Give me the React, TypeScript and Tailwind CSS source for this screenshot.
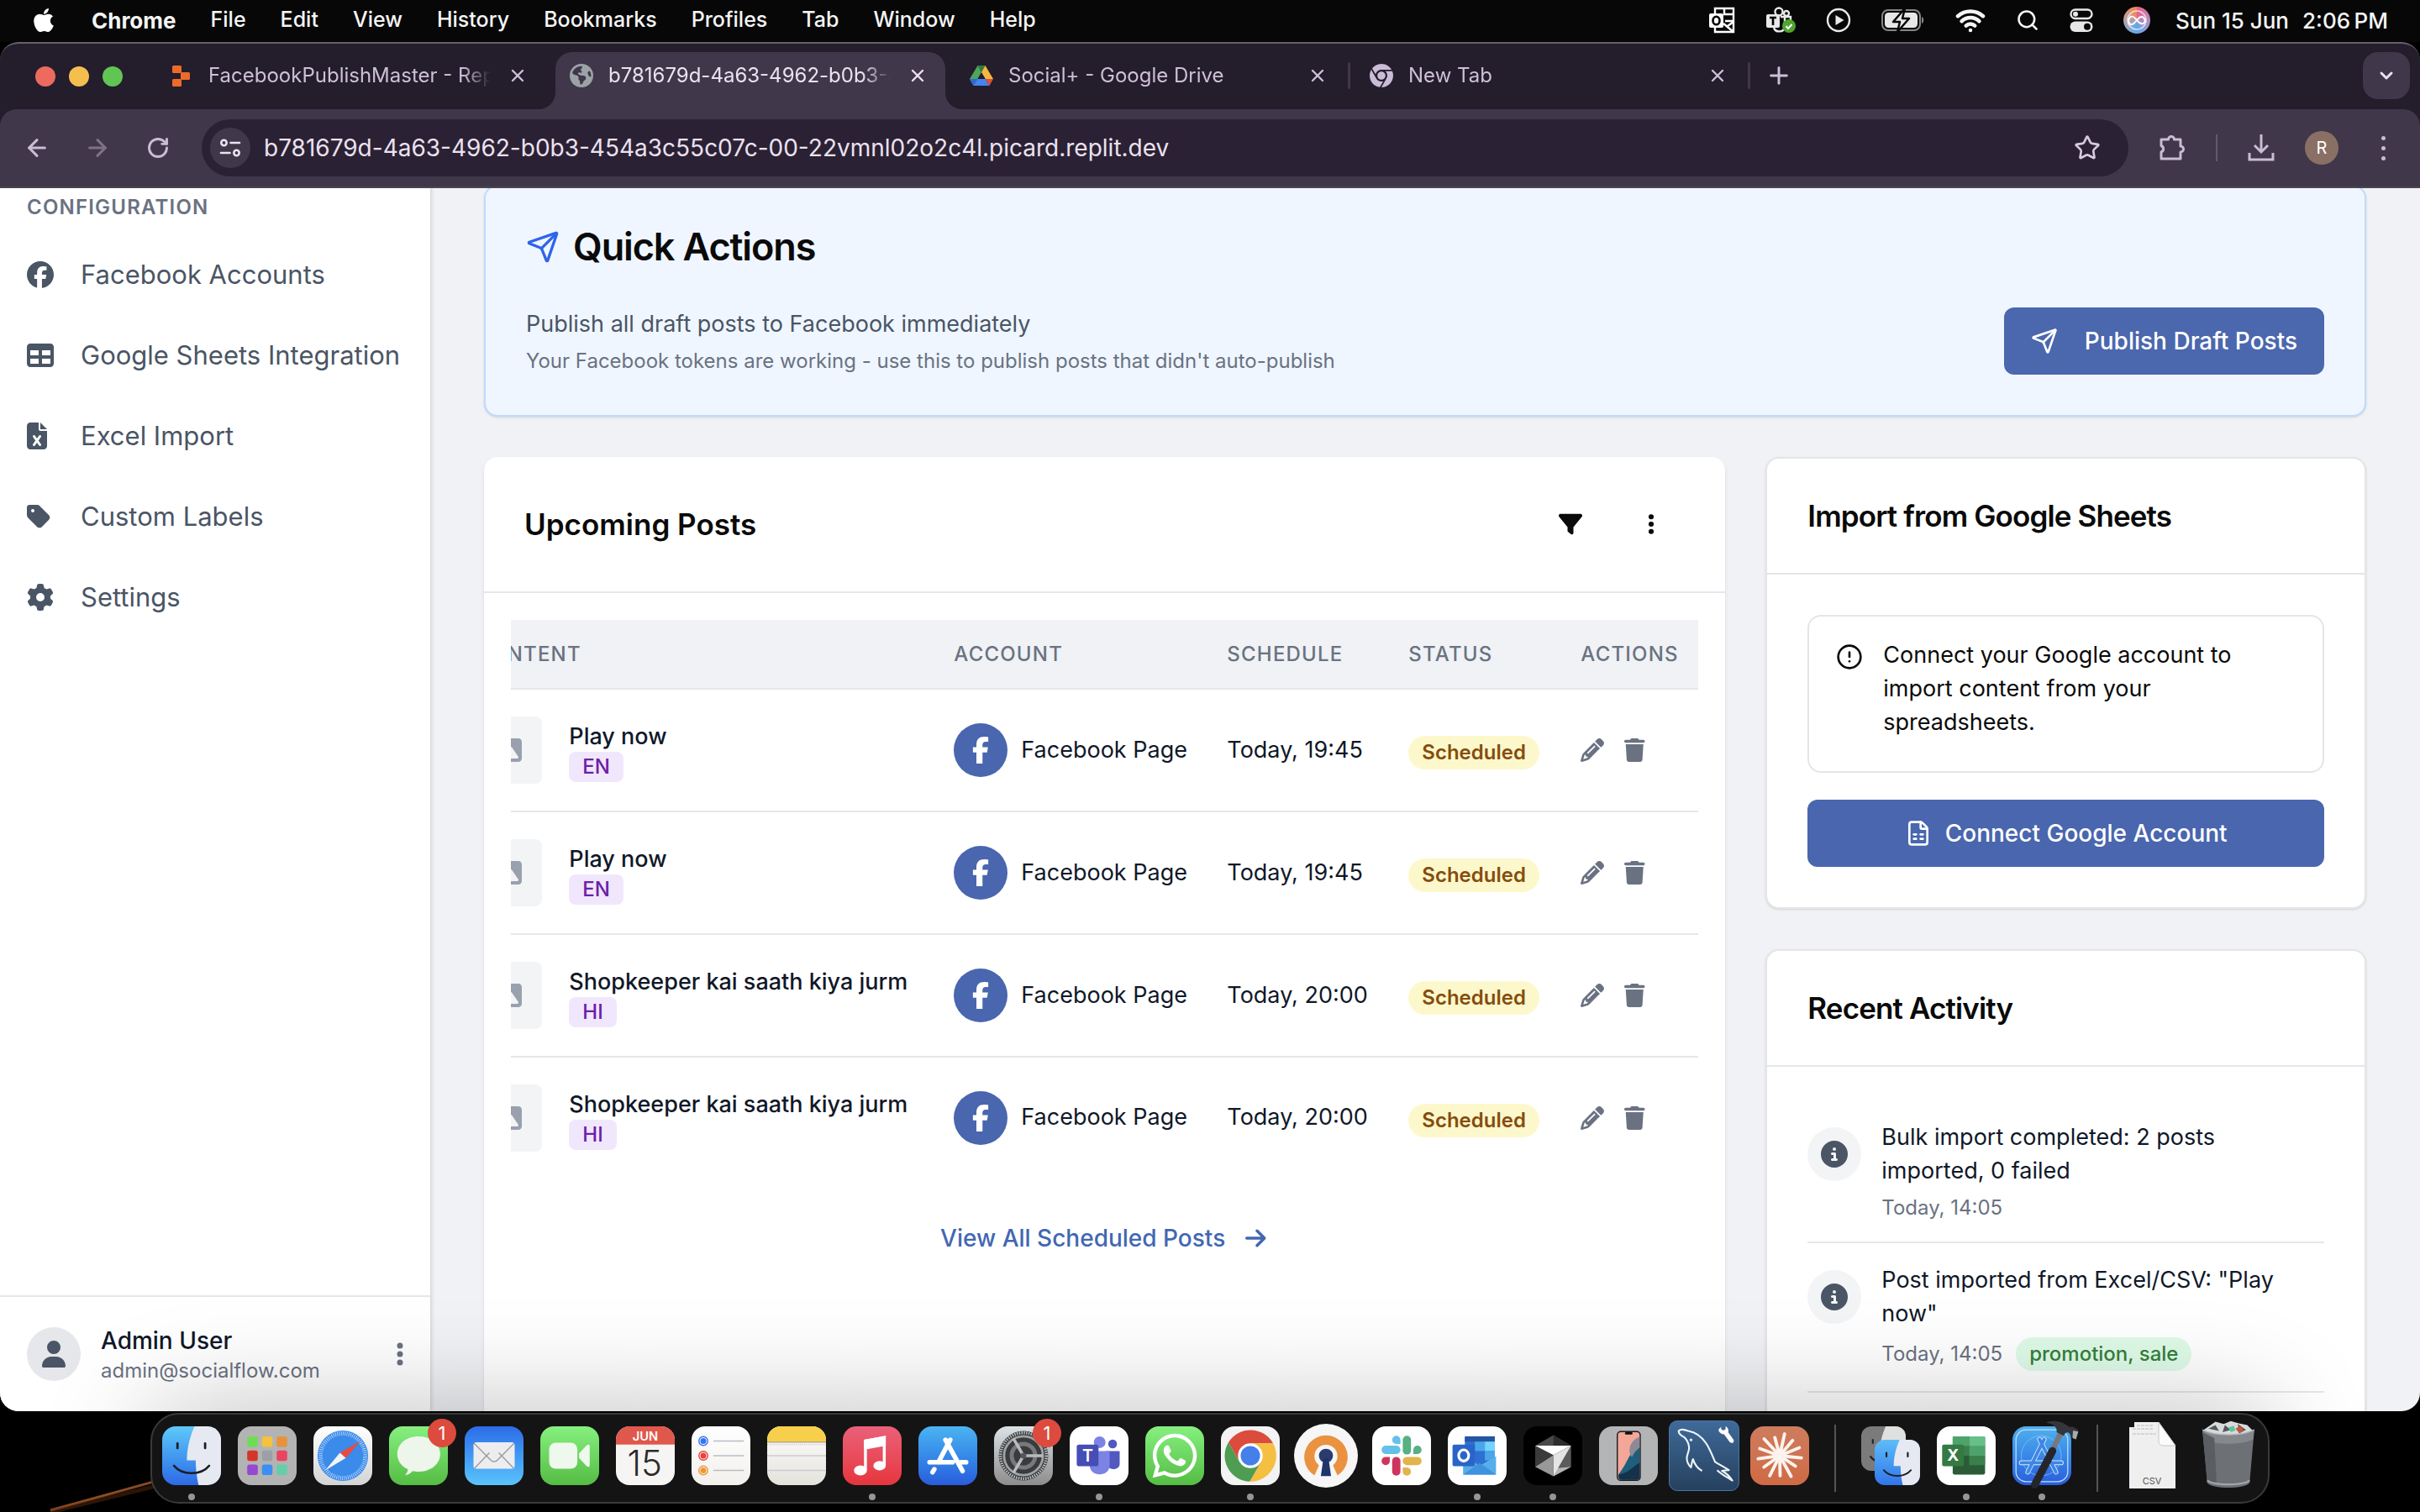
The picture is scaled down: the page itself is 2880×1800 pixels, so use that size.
import React from 'react';
import { ArrowLeft, ArrowRight, ChevronDown, CircleAlert, FileSpreadsheet, Plus, RotateCw, Search, Send, Star, Wifi, X } from 'lucide-react';
import {
  FaApple,
  FaArrowRight,
  FaChrome,
  FaCircleInfo,
  FaEarthAmericas,
  FaEllipsisVertical,
  FaFacebook,
  FaFacebookF,
  FaFileExcel,
  FaFilter,
  FaGear,
  FaImage,
  FaPencil,
  FaTable,
  FaTag,
  FaTrash,
  FaUser,
  FaWhatsapp,
} from 'react-icons/fa6';

/* ---------- macOS menu bar ---------- */

const menus = ['File', 'Edit', 'View', 'History', 'Bookmarks', 'Profiles', 'Tab', 'Window', 'Help'];

function OutlookStatusIcon() {
  return (
    <svg viewBox="0 0 32 32" className="size-8" fill="none" stroke="#fff" strokeWidth="2.4">
      <path d="M8 9V2h22v28H8v-6" />
      <path d="M18 9h12M20 17h10M19 2v7M18 20l12 10M30 18l-7 5" />
      <rect x="1" y="8" width="17" height="17" rx="2" fill="#fff" stroke="none" />
      <ellipse cx="9.500" cy="16.500" rx="4" ry="4.800" stroke="#000" strokeWidth="2.600" />
    </svg>
  );
}

function TeamsStatusIcon() {
  return (
    <svg viewBox="0 0 36 32" className="h-8 w-9" fill="none" stroke="#e8e8e8" strokeWidth="2.4">
      <circle cx="16" cy="6" r="4.500" />
      <circle cx="25" cy="8" r="3" />
      <path d="M20 12h10v6M10 25c2 6 12 6 13-1V12h-5" />
      <rect x="1" y="9" width="16" height="16" rx="2" fill="#e8e8e8" stroke="none" />
      <path d="M5 13h8M9 13v9" stroke="#000" strokeWidth="2.600" />
      <circle cx="28" cy="23" r="8" fill="#4ea52f" stroke="none" />
      <path d="m24.500 23 2.500 3 4.500-5" stroke="#fff" strokeWidth="2" />
    </svg>
  );
}

function BatteryIcon() {
  return (
    <svg viewBox="0 0 52 28" className="h-7 w-[52px]">
      <rect x="1" y="2" width="45" height="24" rx="7" fill="none" stroke="#858585" strokeWidth="2" />
      <path d="M48 10c3 1 3 7 0 8z" fill="#858585" />
      <rect x="4" y="5" width="39" height="18" rx="4.500" fill="#e8e8e8" />
      <path d="M28 0 14 16h8l-3 12 14-16h-8z" fill="#e8e8e8" stroke="#070707" strokeWidth="2.500" strokeLinejoin="round" />
    </svg>
  );
}

function PlayStatusIcon() {
  return (
    <svg viewBox="0 0 30 30" className="size-[30px]">
      <circle cx="15" cy="15" r="13" fill="none" stroke="#e8e8e8" strokeWidth="2.400" />
      <path d="M11.500 9v12l10-6z" fill="#e8e8e8" />
    </svg>
  );
}

function ControlCentreIcon() {
  return (
    <svg viewBox="0 0 28 28" className="size-7">
      <rect x="1.500" y="1.500" width="25" height="10.500" rx="5.250" fill="none" stroke="#e8e8e8" strokeWidth="2.400" />
      <circle cx="7" cy="6.750" r="3" fill="#e8e8e8" />
      <rect x="0.500" y="15.500" width="27" height="12.500" rx="6.250" fill="#e8e8e8" />
      <circle cx="21" cy="21.750" r="4" fill="#070707" />
    </svg>
  );
}

function SiriIcon() {
  return (
    <svg viewBox="0 0 32 32" className="size-8 rounded-full bg-conic from-[#ec5a8c] via-[#5aa9f0] to-[#f5884a]">
      <path d="M6 17c2-8 6-6 10-1s8 6 10 1c-2-7-6-6-10-1s-8 8-10 1z" fill="none" stroke="#fff" strokeWidth="2" />
      <circle cx="16" cy="16" r="11" fill="none" stroke="#fff" strokeWidth="1.500" opacity="0.700" />
    </svg>
  );
}

function MenuBar() {
  return (
    <header className="flex h-[50px] shrink-0 items-center justify-between bg-[#070707] pb-[2px] pl-9 pr-[38px] text-[25px] font-medium text-[#f5f5f5]">
      <nav className="flex items-center gap-[41px]" aria-label="Menu bar">
        <FaApple className="size-8 text-white" />
        <button className="text-[26px] font-bold">Chrome</button>
        {menus.map((m) => (
          <button key={m}>{m}</button>
        ))}
      </nav>
      <div className="flex items-center gap-[30px]">
        <div className="flex items-center gap-9">
          <OutlookStatusIcon />
          <TeamsStatusIcon />
          <PlayStatusIcon />
          <BatteryIcon />
          <Wifi className="h-9 w-9" strokeWidth={3} />
          <Search className="size-7" strokeWidth={2.200} />
          <ControlCentreIcon />
          <SiriIcon />
        </div>
        <div className="flex gap-4 text-[26px]">
          <span>Sun 15 Jun</span>
          <span>{'2:06\u2009PM'}</span>
        </div>
      </div>
    </header>
  );
}

/* ---------- browser chrome ---------- */

function ReplitIcon() {
  return (
    <svg viewBox="0 0 28 28" className="size-7" fill="#ec6b2a">
      <rect x="3" y="2" width="11" height="9" rx="1.500" />
      <rect x="13" y="10" width="11" height="9" rx="1.500" />
      <rect x="3" y="18" width="11" height="9" rx="1.500" />
    </svg>
  );
}

function DriveIcon() {
  return (
    <svg viewBox="0 0 28 26" className="h-[26px] w-7">
      <path d="M9.500 1h9L14 9z" fill="#2f7d3c" />
      <path d="M9.500 1 0 17l4.500 8L14 9z" fill="#4ea65a" />
      <path d="M18.500 1 28 17h-9.200L14 9z" fill="#f4b840" />
      <path d="M4.500 25h19l-4.700-8H9.200z" fill="#4683ee" />
      <path d="M28 17h-9.200l4.700 8z" fill="#dc5040" />
      <path d="M0 17h9.200l-4.700 8z" fill="#3367d6" />
    </svg>
  );
}

type TabInfo = { title: string; icon: React.ReactNode; active?: boolean; divider?: boolean };

const tabs: TabInfo[] = [
  { title: 'FacebookPublishMaster - Replit', icon: <ReplitIcon /> },
  { title: 'b781679d-4a63-4962-b0b3-454a3c', icon: <FaEarthAmericas className="size-7 text-[#9ba3a6]" />, active: true },
  { title: 'Social+ - Google Drive', icon: <DriveIcon />, divider: true },
  { title: 'New Tab', icon: <FaChrome className="size-7 text-[#c9bcd6]" />, divider: true },
];

function BrowserTab({ tab }: { tab: TabInfo }) {
  return (
    <div className="relative h-full w-[476px] pt-[10px]">
      {tab.active && (
        <div className="absolute inset-x-[6px] bottom-0 top-[10px] rounded-t-[20px] bg-[#40374a]">
          <div className="absolute -left-5 bottom-0 size-5 overflow-hidden">
            <div className="size-5 rounded-br-[20px] shadow-[10px_10px_0_8px_#40374a]" />
          </div>
          <div className="absolute -right-5 bottom-0 size-5 overflow-hidden">
            <div className="size-5 rounded-bl-[20px] shadow-[-10px_10px_0_8px_#40374a]" />
          </div>
        </div>
      )}
      <div className="relative flex h-14 items-center pl-[23px] pr-[27px]">
        {tab.icon}
        <button
          className={
            'ml-[18px] mr-5 flex-1 overflow-hidden whitespace-nowrap text-left text-[24px] mask-r-from-90% ' +
            (tab.active ? 'text-[#ebe2f0]' : 'text-[#cdbfd8]')
          }
        >
          {tab.title}
        </button>
        <button aria-label={`Close ${tab.title}`} className={tab.active ? 'text-[#ebe2f0]' : 'text-[#cdbfd8]'}>
          <X className="size-6" strokeWidth={2.400} />
        </button>
        {tab.divider && <span className="absolute right-0 top-3 h-8 w-[3px] rounded bg-[#40374a]" />}
      </div>
    </div>
  );
}

function TabStrip() {
  return (
    <div className="flex h-[78px] items-start justify-between">
      <div className="flex h-full">
        <div className="flex h-full items-center gap-4 pl-[42px] pr-[33px]">
          <span className="size-6 rounded-full bg-[#ed6a5f]" />
          <span className="size-6 rounded-full bg-[#f5bf4f]" />
          <span className="size-6 rounded-full bg-[#61c554]" />
        </div>
        {tabs.map((t) => (
          <BrowserTab key={t.title} tab={t} />
        ))}
        <button aria-label="New tab" className="mt-[10px] flex h-14 items-center pl-[18px] text-[#cdbfd8]">
          <Plus className="size-8" strokeWidth={2.200} />
        </button>
      </div>
      <button aria-label="Search tabs" className="mr-3 mt-[10px] flex size-14 items-center justify-center rounded-[18px] bg-[#40374a] text-[#ebe2f0]">
        <ChevronDown className="size-6" strokeWidth={3} />
      </button>
    </div>
  );
}

function TuneIcon() {
  return (
    <svg viewBox="0 0 26 26" className="size-[26px]" fill="none" stroke="#ebe2f0" strokeWidth="2.600" strokeLinecap="round">
      <circle cx="5.500" cy="7" r="3.200" />
      <path d="M13.500 7H24" />
      <circle cx="20.500" cy="19" r="3.200" />
      <path d="M2 19h10.500" />
    </svg>
  );
}

function ExtensionsIcon() {
  return (
    <svg viewBox="0 0 32 32" className="size-8" fill="none" stroke="#c9bcd6" strokeWidth="3" strokeLinejoin="round">
      <path d="M3 6h8.500a3.500 3.500 0 0 1 7 0H26v8a3.500 3.500 0 0 1 0 7v8H3v-8a4 4 0 0 0 0-7.500z" />
    </svg>
  );
}

function DownloadIcon() {
  return (
    <svg viewBox="0 0 32 32" className="size-8" fill="none" stroke="#c9bcd6" strokeWidth="3">
      <path d="M16 0v20M8 13l8 8 8-8M2 22v8h28v-8" />
    </svg>
  );
}

function Toolbar() {
  return (
    <div className="flex h-[94px] items-center gap-9 rounded-t-[20px] border-b-2 border-[#4c4552] bg-[#40374a] pl-7 pr-[27px]">
      <div className="flex gap-10 text-[#c9bcd6]">
        <button aria-label="Back"><ArrowLeft className="size-8" strokeWidth={2.300} /></button>
        <button aria-label="Forward" className="text-[#7d7286]"><ArrowRight className="size-8" strokeWidth={2.300} /></button>
        <button aria-label="Reload"><RotateCw className="size-8 p-[2px]" strokeWidth={2.500} /></button>
      </div>
      <div className="flex h-[68px] flex-1 items-center rounded-full bg-[#2b2134] pl-[10px] pr-[33px]">
        <button aria-label="Site information" className="flex size-12 items-center justify-center rounded-full bg-[#40374a]">
          <TuneIcon />
        </button>
        <input
          aria-label="Address"
          className="ml-4 flex-1 bg-transparent text-[28px] text-[#ebe2f0] outline-none"
          defaultValue="b781679d-4a63-4962-b0b3-454a3c55c07c-00-22vmnl02o2c4l.picard.replit.dev"
        />
        <button aria-label="Bookmark this page" className="text-[#d6cbdf]"><Star className="size-8" strokeWidth={2} /></button>
      </div>
      <button aria-label="Extensions"><ExtensionsIcon /></button>
      <span className="h-8 w-[2px] bg-[#625a6c]" />
      <button aria-label="Downloads"><DownloadIcon /></button>
      <button aria-label="Profile" className="flex size-10 items-center justify-center rounded-full bg-[#8a7064] text-[20px] text-white">R</button>
      <button aria-label="Browser menu" className="flex w-[34px] flex-col items-center gap-[7px]">
        <span className="size-[5px] rounded-full bg-[#c9bcd6]" />
        <span className="size-[5px] rounded-full bg-[#c9bcd6]" />
        <span className="size-[5px] rounded-full bg-[#c9bcd6]" />
      </button>
    </div>
  );
}

/* ---------- web page ---------- */

const navItems = [
  { label: 'Facebook Accounts', Icon: FaFacebook },
  { label: 'Google Sheets Integration', Icon: FaTable },
  { label: 'Excel Import', Icon: FaFileExcel },
  { label: 'Custom Labels', Icon: FaTag },
  { label: 'Settings', Icon: FaGear },
];

function Sidebar() {
  return (
    <aside className="relative flex w-[512px] shrink-0 flex-col justify-between bg-white shadow-[2px_0_4px_rgba(0,0,0,0.12)]">
      <div className="pt-[7px]">
        <h2 className="px-8 text-[24px]/8 font-semibold tracking-wider text-gray-500">CONFIGURATION</h2>
        <nav className="mt-4" aria-label="Configuration">
          {navItems.map(({ label, Icon }) => (
            <a key={label} href="#" className="flex h-24 items-center px-8 text-[31px] text-gray-600">
              <span className="w-16">
                <Icon className="size-8" preserveAspectRatio="xMinYMid" />
              </span>
              {label}
            </a>
          ))}
        </nav>
      </div>
      <div className="flex items-center border-t-2 border-gray-200 p-8">
        <span className="flex size-16 items-center justify-center rounded-full bg-gray-200">
          <FaUser className="size-8 text-gray-600" />
        </span>
        <div className="ml-6 flex-1">
          <p className="text-[28px]/10 font-medium text-gray-900">Admin User</p>
          <p className="text-[24px]/8 text-gray-500">admin@socialflow.com</p>
        </div>
        <button aria-label="Account menu" className="text-gray-500">
          <FaEllipsisVertical className="size-8" preserveAspectRatio="xMaxYMid" />
        </button>
      </div>
    </aside>
  );
}

function QuickActions() {
  return (
    <section className="rounded-2xl border-2 border-blue-200 bg-[#eff6ff] p-12 shadow-sm">
      <h3 className="flex items-center gap-4 text-[45px]/12 font-semibold tracking-tight text-neutral-950">
        <Send className="size-10 text-[#2f63eb]" />
        Quick Actions
      </h3>
      <div className="mt-12 flex items-center justify-between">
        <div>
          <p className="text-[27px]/10 text-gray-600">Publish all draft posts to Facebook immediately</p>
          <p className="mt-2 text-[24px]/8 text-gray-500">
            Your Facebook tokens are working - use this to publish posts that didn't auto-publish
          </p>
        </div>
        <button className="flex h-20 items-center gap-8 rounded-xl bg-[#4b67ad] px-8 text-[28px] font-medium text-white">
          <Send className="size-8" />
          Publish Draft Posts
        </button>
      </div>
    </section>
  );
}

const posts = [
  { title: 'Play now', lang: 'EN', when: 'Today, 19:45' },
  { title: 'Play now', lang: 'EN', when: 'Today, 19:45' },
  { title: 'Shopkeeper kai saath kiya jurm', lang: 'HI', when: 'Today, 20:00' },
  { title: 'Shopkeeper kai saath kiya jurm', lang: 'HI', when: 'Today, 20:00' },
];

function UpcomingPosts() {
  return (
    <section className="col-span-2 rounded-2xl bg-white shadow-md">
      <div className="flex h-[162px] items-center justify-between border-b-2 border-gray-200 px-12">
        <h3 className="text-[35px] font-semibold text-neutral-950">Upcoming Posts</h3>
        <div className="flex gap-4 text-neutral-950">
          <button aria-label="Filter" className="flex size-20 items-center justify-center"><FaFilter className="size-7" /></button>
          <button aria-label="More" className="flex size-20 items-center justify-center"><FaEllipsisVertical className="size-7" /></button>
        </div>
      </div>
      <div className="p-8">
        <div className="flex justify-end overflow-hidden">
          <table className="w-[1480px] shrink-0 table-fixed">
            <colgroup>
              <col className="w-[570px]" />
              <col className="w-[325px]" />
              <col className="w-[216px]" />
              <col className="w-[205px]" />
              <col className="w-[164px]" />
            </colgroup>
            <thead className="bg-[#f0f2f5]">
              <tr className="h-[82px] border-b-2 border-gray-200 text-left text-[24px] tracking-wider text-gray-500">
                <th className="pl-6 font-medium">CONTENT</th>
                <th className="pl-6 font-medium">ACCOUNT</th>
                <th className="pl-6 font-medium">SCHEDULE</th>
                <th className="pl-6 font-medium">STATUS</th>
                <th className="pl-6 font-medium">ACTIONS</th>
              </tr>
            </thead>
            <tbody className="text-[27px] text-gray-900">
              {posts.map((p, i) => (
                <tr key={i} className="h-[146px] border-b-2 border-gray-200 last:h-36 last:border-b-0">
                  <td className="pl-6">
                    <div className="flex items-center gap-8">
                      <span className="flex size-20 items-center justify-center rounded-lg bg-gray-100">
                        <FaImage className="size-8 text-gray-400" />
                      </span>
                      <div className="pt-1">
                        <p className="whitespace-nowrap text-[27px]/9 font-medium">{p.title}</p>
                        <span className="block w-fit rounded-lg bg-[#f1e7fd] px-4 text-[24px]/9 font-medium text-[#6b21a8]">{p.lang}</span>
                      </div>
                    </div>
                  </td>
                  <td className="pl-6">
                    <div className="flex items-center gap-4">
                      <span className="flex size-16 items-center justify-center rounded-full bg-[#4966ae]">
                        <FaFacebookF className="size-8 text-white" />
                      </span>
                      Facebook Page
                    </div>
                  </td>
                  <td className="pl-6">{p.when}</td>
                  <td className="pl-6">
                    <span className="mt-[6px] block w-fit rounded-full bg-[#fdf8cb] px-4 text-[24px]/10 font-semibold text-[#854d0e]">Scheduled</span>
                  </td>
                  <td className="pl-6">
                    <div className="flex items-center gap-6 text-gray-500">
                      <button aria-label="Edit"><FaPencil className="size-7" /></button>
                      <button aria-label="Delete"><FaTrash className="size-7" preserveAspectRatio="xMinYMid" /></button>
                    </div>
                  </td>
                </tr>
              ))}
            </tbody>
          </table>
        </div>
        <div className="mt-8 flex justify-center">
          <a href="#" className="flex h-20 items-center gap-6 text-[28px] font-medium text-[#4267b2]">
            View All Scheduled Posts
            <FaArrowRight className="size-7" preserveAspectRatio="xMinYMid" />
          </a>
        </div>
      </div>
    </section>
  );
}

function ImportCard() {
  return (
    <section className="rounded-2xl border-2 border-neutral-200 bg-white shadow-sm">
      <h3 className="border-b-2 border-neutral-200 p-12 text-[35px]/10 font-semibold tracking-tight text-neutral-950">
        Import from Google Sheets
      </h3>
      <div className="p-12">
        <div className="flex gap-6 rounded-2xl border-2 border-neutral-200 px-8 pb-[38px] pt-[26px] text-neutral-950">
          <CircleAlert className="mt-[6px] size-8 shrink-0" />
          <p className="text-[27px]/10">Connect your Google account to import content from your spreadsheets.</p>
        </div>
        <button className="mt-8 flex h-20 w-full items-center justify-center gap-4 rounded-xl bg-[#4966ae] text-[28px] font-medium text-white">
          <FileSpreadsheet className="size-8" />
          Connect Google Account
        </button>
      </div>
    </section>
  );
}

const activity = [
  { text: 'Bulk import completed: 2 posts imported, 0 failed', time: 'Today, 14:05' },
  { text: 'Post imported from Excel/CSV: "Play now"', time: 'Today, 14:05', label: 'promotion, sale' },
];

function RecentActivity() {
  return (
    <section className="grow rounded-t-2xl border-2 border-b-0 border-neutral-200 bg-white shadow-sm">
      <h3 className="border-b-2 border-gray-200 p-12 text-[35px]/10 font-semibold tracking-tight text-neutral-950">Recent Activity</h3>
      <ul className="px-12 pb-12 pt-10">
        {activity.map((a, i) => (
          <li key={i} className="flex gap-6 border-b-2 border-gray-200 py-6 pr-8">
            <span className="mt-2 flex size-16 shrink-0 items-center justify-center rounded-full bg-gray-100">
              <FaCircleInfo className="size-8 text-gray-600" />
            </span>
            <div>
              <p className="text-[27px]/10 text-gray-900">{a.text}</p>
              <p className="mt-2 flex items-center gap-4 text-[24px]/8 text-gray-500">
                {a.time}
                {a.label && <span className="rounded-full bg-[#dffbe8] px-4 text-[24px]/10 font-medium text-[#357f3e]">{a.label}</span>}
              </p>
            </div>
          </li>
        ))}
      </ul>
    </section>
  );
}

function WebPage() {
  return (
    <div className="flex min-h-0 flex-1 bg-[#f0f2f5]">
      <Sidebar />
      <main className="flex min-w-0 flex-1 flex-col overflow-hidden px-16">
        <div className="-mt-1 flex grow flex-col">
          <QuickActions />
          <div className="mt-12 grid grow grid-cols-3 gap-12">
            <UpcomingPosts />
            <div className="flex flex-col gap-12">
              <ImportCard />
              <RecentActivity />
            </div>
          </div>
        </div>
      </main>
    </div>
  );
}

/* ---------- dock ---------- */

const tile = 'size-[70px] rounded-[16px] ';

function FinderArt() {
  return (
    <>
      <path d="M55 0C46 20 42 40 42 58h15c0 14 2 30 5 42h38V0z" fill="#e6e9f1" />
      <path d="M26 29v8M73 29v8" stroke="#1d1d28" strokeWidth="4" strokeLinecap="round" />
      <path d="M20 67c14 17 46 17 60 0" fill="none" stroke="#1d1d28" strokeWidth="3.500" strokeLinecap="round" />
    </>
  );
}

function Finder() {
  return (
    <svg viewBox="0 0 100 100" className={tile + 'bg-linear-to-b from-[#5fc9f8] to-[#3068e6]'}>
      <FinderArt />
    </svg>
  );
}

function Launchpad() {
  const colors = ['#6fdc55', '#f4c23c', '#e8923a', '#d4352b', '#9aa0a6', '#ea4560', '#9449d0', '#3c8ff2', '#63cfa8'];
  return (
    <svg viewBox="0 0 100 100" className={tile + 'bg-[#b3b3b3]'}>
      {colors.map((c, i) => (
        <rect key={c} x={16 + (i % 3) * 25} y={17 + Math.floor(i / 3) * 24} width="18" height="18" rx="4" fill={c} />
      ))}
    </svg>
  );
}

function Safari() {
  return (
    <svg viewBox="0 0 100 100" className={tile + 'bg-linear-to-b from-white to-[#d4d4d4]'}>
      <circle cx="50" cy="50" r="43" fill="#3b8bea" />
      <circle cx="50" cy="50" r="38" fill="none" stroke="#d5e9ff" strokeWidth="7" strokeDasharray="1 2.300" />
      <path d="M80 25 45 45l10 9z" fill="#ea4a40" />
      <path d="M20 75 45 45l10 9z" fill="#f4f4f4" />
    </svg>
  );
}

function Messages() {
  return (
    <svg viewBox="0 0 100 100" className={tile + 'bg-linear-to-b from-[#86f07f] to-[#55bd43]'}>
      <path d="M50 17c21 0 37 13 37 30S71 77 50 77c-4 0-7 0-10-1-3 4-7 6-13 7 4-4 5-7 5-10-11-5-18-15-18-26 0-17 15-30 36-30z" fill="#eef6ec" />
    </svg>
  );
}

function Mail() {
  return (
    <svg viewBox="0 0 100 100" className={tile + 'bg-linear-to-b from-[#2e6be8] to-[#5cc3fb]'}>
      <rect x="15" y="27" width="70" height="45" rx="5" fill="#ededef" />
      <path d="m17 71 25-26M83 71 58 45M16 29l28 28c4 4 8 4 12 0l28-28" fill="none" stroke="#9a9ca3" strokeWidth="2" />
    </svg>
  );
}

function FaceTime() {
  return (
    <svg viewBox="0 0 100 100" className={tile + 'bg-linear-to-b from-[#86f07f] to-[#55bd43]'} fill="#eef8ec">
      <rect x="15" y="28" width="48" height="44" rx="11" />
      <path d="M66 46 79 32c3-2 5-1 5 2v32c0 3-2 4-5 2L66 54z" />
    </svg>
  );
}

function Calendar() {
  return (
    <svg viewBox="0 0 100 100" className={tile + 'bg-[#f6f5f3]'} textAnchor="middle">
      <rect width="100" height="31" fill="#e0584c" />
      <text x="50" y="24" fontSize="21" fontWeight="600" fill="#fff">JUN</text>
      <text x="49" y="84" fontSize="60" fontWeight="300" fill="#2b2b2b">15</text>
    </svg>
  );
}

function Reminders() {
  const rows: [number, string][] = [[25, '#3273f0'], [50, '#e6443a'], [75, '#ef9634']];
  return (
    <svg viewBox="0 0 100 100" className={tile + 'bg-linear-to-b from-white to-[#f1f0ed]'}>
      {rows.map(([y, c]) => (
        <g key={y}>
          <circle cx="20" cy={y} r="7.500" fill="none" stroke={c} strokeWidth="2" />
          <circle cx="20" cy={y} r="5" fill={c} />
          <path d={`M37 ${y}h52`} stroke="#bcbcc2" strokeWidth="2" />
        </g>
      ))}
    </svg>
  );
}

function Notes() {
  return (
    <svg viewBox="0 0 100 100" className={tile + 'bg-linear-to-b from-white to-[#e4e2db]'}>
      <rect width="100" height="26" fill="#f8cf4b" />
      <path d="M0 27h100" stroke="#a99b6a" strokeWidth="2" />
      <path d="M0 31h100" stroke="#b3b1aa" strokeWidth="1.500" strokeDasharray="1.500 2" />
      <path d="M0 50h100M0 75h100" stroke="#cdcbd0" strokeWidth="2" />
    </svg>
  );
}

function Music() {
  return (
    <svg viewBox="0 0 100 100" className={tile + 'bg-linear-to-b from-[#ea6079] to-[#e6343c]'} fill="#fff">
      <path d="M36 23 73 16v50h-5V34l-27 5v35h-5z" />
      <path d="M36 23 73 16v16l-37 7z" />
      <ellipse cx="30" cy="75" rx="11" ry="8.500" />
      <ellipse cx="62.500" cy="67" rx="10.500" ry="8" />
    </svg>
  );
}

function AppStore() {
  return (
    <svg viewBox="0 0 100 100" className={tile + 'bg-linear-to-b from-[#4cb4f2] to-[#2a5cdc]'} stroke="#fff" strokeWidth="8" strokeLinecap="round" fill="none">
      <path d="M54 23 34 61M27 73l-3 5M46 23l29 53M19 61h39M72 61h9" />
    </svg>
  );
}

function SystemSettings() {
  return (
    <svg viewBox="0 0 100 100" className={tile + 'bg-linear-to-b from-[#dbe3e8] to-[#8d8d8d]'} fill="none">
      <circle cx="50" cy="50" r="42" fill="#3a3b3d" />
      <circle cx="50" cy="50" r="39" stroke="#bfc2c4" strokeWidth="5" strokeDasharray="2 2" />
      <circle cx="50" cy="50" r="33" stroke="#9fa3a6" strokeWidth="4" />
      <circle cx="50" cy="50" r="20" stroke="#77797c" strokeWidth="7" />
      <path d="M50 50h33M50 50 33 21M50 50 33 79" stroke="#b9bcbf" strokeWidth="5" />
      <circle cx="50" cy="50" r="5" fill="#55575a" />
    </svg>
  );
}

function Teams() {
  return (
    <svg viewBox="0 0 100 100" className={tile + 'bg-white'}>
      <circle cx="73" cy="30" r="7.500" fill="#5158c0" />
      <path d="M62 42h23v22c0 10-15 12-21 4z" fill="#5158c0" />
      <circle cx="51" cy="27" r="10" fill="#7b83e4" />
      <path d="M34 42h34v24c0 21-34 21-34 0z" fill="#7b83e4" />
      <rect x="12" y="31" width="37" height="37" rx="4" fill="#464db4" />
      <text x="30.500" y="60" fontSize="28" fontWeight="600" fill="#fff" textAnchor="middle">T</text>
    </svg>
  );
}

function WhatsAppTile() {
  return (
    <div className={tile + 'flex items-center justify-center bg-linear-to-b from-[#86f07f] to-[#55bd43]'}>
      <FaWhatsapp className="size-[60px] text-white" />
    </div>
  );
}

function ChromeTile() {
  return (
    <svg viewBox="0 0 100 100" className={tile + 'bg-[#f3f3f3]'}>
      <path d="M12.700 27.400A44 44 0 0 1 88.700 29H50L31.800 60.500z" fill="#db4c3c" />
      <path d="M88.700 29A44 44 0 0 1 49 94l19.200-33.500L50 29z" fill="#f5bf41" />
      <path d="M12.700 27.400A44 44 0 0 0 49 94l19.200-33.500H31.800z" fill="#4f9c53" />
      <circle cx="50" cy="50" r="21" fill="#fff" />
      <circle cx="50" cy="50" r="16.500" fill="#4580ea" />
    </svg>
  );
}

function OpenVpn() {
  return (
    <svg viewBox="0 0 100 100" className="-m-[3px] size-[76px] shrink-0 rounded-full bg-[#f6f6f7]">
      <path d="M32 81A34 34 0 1 1 68 81L61 65A18 18 0 1 0 39 65z" fill="#ea923f" />
      <circle cx="50" cy="50" r="11" fill="#2b3c6c" />
      <path d="M46 54h8l4 28H42z" fill="#1f3468" />
    </svg>
  );
}

function Slack() {
  return (
    <svg viewBox="0 0 100 100" className={tile + 'bg-white'}>
      <g fill="#63c1ea"><rect x="16" y="33" width="32" height="14" rx="7" /><path d="M48 30h-7a7 7 0 1 1 7-7z" /></g>
      <g fill="#58b083"><rect x="52" y="16" width="14" height="32" rx="7" /><path d="M70 47v-7a7 7 0 1 1 7 7z" /></g>
      <g fill="#e3b34c"><rect x="52" y="52" width="32" height="14" rx="7" /><path d="M52 70h7a7 7 0 1 1-7 7z" /></g>
      <g fill="#cf355c"><rect x="34" y="52" width="14" height="32" rx="7" /><path d="M30 52v7a7 7 0 1 1-7-7z" /></g>
    </svg>
  );
}

function Outlook() {
  return (
    <svg viewBox="0 0 100 100" className={tile + 'bg-white'}>
      <rect x="29" y="17" width="51" height="50" rx="3" fill="#2d6fd2" />
      <rect x="29" y="17" width="51" height="9" fill="#2456a4" />
      <rect x="63" y="26" width="17" height="16" fill="#76d3fb" />
      <rect x="46" y="26" width="17" height="16" fill="#4aa6ea" />
      <rect x="63" y="42" width="17" height="16" fill="#4aa6ea" />
      <path d="M26 48 54 67 82 51v31H26z" fill="#57aeea" />
      <path d="m26 82 28-20 28 20z" fill="#3f92de" />
      <rect x="8" y="31" width="38" height="37" rx="3" fill="#2a64c8" />
      <ellipse cx="27" cy="49.500" rx="8.500" ry="9.500" fill="none" stroke="#fff" strokeWidth="4.500" />
    </svg>
  );
}

function Cursor() {
  return (
    <svg viewBox="0 0 100 100" className={tile + 'bg-black'}>
      <path d="M51 15 20 33h61z" fill="#4a4a4a" />
      <path d="M51 15v18h30z" fill="#2d2d2d" />
      <path d="M20 33v36l31-20z" fill="#3b3b3b" />
      <path d="M20 69l31 16V49z" fill="#989898" />
      <path d="M81 33v36L51 85z" fill="#5b5b5b" />
      <path d="M81 69 51 85l6-14z" fill="#b5b5b5" />
      <path d="M20 33h61L51 49z" fill="#fff" />
      <path d="M81 33 51 85V49z" fill="#e4e4e4" />
    </svg>
  );
}

function IPhone() {
  return (
    <svg viewBox="0 0 100 100" className={tile + 'bg-[#b3b4b5]'}>
      <rect x="30" y="8" width="41" height="85" rx="7" fill="#1c1c1e" />
      <rect x="32" y="10" width="37" height="81" rx="5" fill="#f2a799" />
      <path d="M69 30C52 42 50 60 33 82v4c0 3 2 5 5 5h26c3 0 5-2 5-5z" fill="#1d5f7c" />
      <path d="M69 18C48 26 50 48 56 52c4-8 8-12 13-16z" fill="#8c8a96" />
      <path d="M69 62C60 66 50 80 33 82v4c0 3 2 5 5 5h26c3 0 5-2 5-5z" fill="#16324a" />
      <rect x="44" y="10" width="13" height="4" rx="2" fill="#111" />
    </svg>
  );
}

function MySql() {
  return (
    <svg viewBox="0 0 100 100" className="-m-[7px] size-[84px] shrink-0 rounded-[10px] border border-[#4776a4] bg-linear-to-b from-[#3f6a99] to-[#26415f]" fill="none" stroke="#eef4f8" strokeWidth="2.600" strokeLinejoin="round">
      <path d="M47 72C40 68 36 62 34 55c-2 4-2 8-3 12-6-6-7-13-5-19 1-4 3-7 2-12-1-6-4-10-7-13-4-2-8-5-8-9 3-3 9-2 14 0 12 2 20 9 26 18 6 9 9 18 13 27 6 4 13 7 20 12-4 0-7 0-10 1 6 3 11 8 15 14-8-5-16-9-22-15" />
      <circle cx="31" cy="27" r="0.800" />
      <path d="M75 8c-1 3 0 5 3 5s4-3 3-6c4 2 5 6 4 9l8 11c1 4-3 6-6 3l-8-11c-4 0-8-3-8-7z" fill="#fff" strokeWidth="0" />
    </svg>
  );
}

function Claude() {
  const rays = [37, 32, 40, 34, 38, 33, 37, 36, 39, 32, 38, 34, 36];
  return (
    <svg viewBox="0 0 100 100" className={tile + 'bg-linear-to-b from-[#cd7c5e] to-[#d06a45]'} stroke="#fdf3ee" strokeWidth="5.500" strokeLinecap="round">
      {rays.map((r, i) => {
        const a = (i / rays.length) * Math.PI * 2 + 0.1;
        return <line key={i} x1="50" y1="50" x2={50 + Math.cos(a) * r} y2={50 + Math.sin(a) * r} />;
      })}
    </svg>
  );
}

function FinderPair() {
  return (
    <div className="flex size-[70px] items-end justify-end">
      <svg viewBox="0 0 100 100" className="-mr-[37px] size-[53px] shrink-0 self-start rounded-xl bg-[#7b7b7b]">
        <path d="M55 0C46 20 42 40 42 58h58V0z" fill="#e0e0e0" />
        <path d="M26 29v10M20 67c6 8 12 12 20 13" fill="none" stroke="#222" strokeWidth="4" />
      </svg>
      <svg viewBox="0 0 100 100" className="relative size-[54px] shrink-0 rounded-xl bg-linear-to-b from-[#5fbcf8] to-[#3375ea]">
        <FinderArt />
      </svg>
    </div>
  );
}

function Excel() {
  return (
    <svg viewBox="0 0 100 100" className={tile + 'bg-white'}>
      <rect x="27" y="17" width="55" height="65" rx="3" fill="#2b5c37" />
      <path d="M27 17h28v17H27z" fill="#4ea36b" />
      <path d="M55 17h27v17H55z" fill="#66c088" />
      <path d="M27 34h28v16H27z" fill="#3b7f4d" />
      <path d="M55 34h27v16H55z" fill="#4ea36b" />
      <path d="M55 50h27v16H55z" fill="#3b7f4d" />
      <rect x="9" y="31" width="37" height="37" rx="3" fill="#347a42" />
      <text x="27.500" y="59" fontSize="27" fontWeight="700" fill="#fff" textAnchor="middle">X</text>
    </svg>
  );
}

function Xcode() {
  return (
    <svg viewBox="0 0 100 100" className={tile + 'overflow-visible bg-linear-to-b from-[#4fb0ee] to-[#2c5cdc]'} fill="none">
      <rect x="6" y="6" width="88" height="88" rx="17" stroke="#bfe0fa" strokeWidth="1.800" />
      <circle cx="49" cy="50" r="34" stroke="#8cc6f5" strokeWidth="1" />
      <path d="M54 22 26 78M46 22l28 56M15 62h68" stroke="#d4ebfc" strokeWidth="8" strokeLinecap="round" />
      <path d="M54 22 26 78M46 22l28 56M15 62h68" stroke="#3f86e4" strokeWidth="5.500" strokeLinecap="round" />
      <path d="M83 10 66 44" stroke="#77787c" strokeWidth="9" />
      <path d="M68 42 38 99" stroke="#25262b" strokeWidth="13" strokeLinecap="round" />
      <path d="M57-6c12-6 28-2 40 7l6 0 9 5-4 14-8-2-2-6c-5-3-8-2-11 4l-12-6c2-8-6-15-18-16z" fill="#34363c" />
      <path d="M103 7l9 2-4 13-6-2z" fill="#a9abb2" />
    </svg>
  );
}

function CsvFile() {
  return (
    <svg viewBox="0 0 56 80" className="-my-[6px] h-20 w-14 shrink-0">
      <path d="M6 0h29l20 28v51H0V6h6z" fill="#efefef" />
      <path d="M35 0v22c0 4 2 6 6 6h14z" fill="#fbfbfb" stroke="#c6c6c6" />
      <path d="M9 4h20M4 8h25M4 14h28" stroke="#bcbcbc" strokeDasharray="4 1" />
      <text x="27" y="74" fontSize="11" fill="#555" textAnchor="middle">CSV</text>
    </svg>
  );
}

function TrashCan() {
  return (
    <svg viewBox="0 0 100 100" className="size-[70px] overflow-visible">
      <path d="M8 6 28-8l14 4 12-5 14 4 14 3 10 10-12 8H18z" fill="#d9dadc" />
      <path d="m16 4 12-6 6 10zM44-2l10 8-14 4zM66-4l14 10-12 6z" fill="#55585e" />
      <path d="m50 2 9-3 3 8-8 3z" fill="#5cc7a0" />
      <path d="m62 4 9-5 5 9-8 3z" fill="#c4583c" />
      <path d="M6 6c20 11 68 11 88 0l-8 90c-6 11-66 11-72 0z" fill="#6d7175" />
      <path d="M6 6c20 11 68 11 88 0l-2 16c-20 10-64 10-84 0z" fill="#85898d" />
      <path d="M26 20l4 78c-8-1-13-3-16-6L6 10z" fill="#5a5e62" />
      <path d="M6 6c20 11 68 11 88 0" fill="none" stroke="#b5b8bb" strokeWidth="2" />
      <path d="M14 92c10 9 62 9 72 0" fill="none" stroke="#a1a4a8" strokeWidth="3" />
    </svg>
  );
}

type DockApp = { name: string; icon: React.ReactNode; running?: boolean; badge?: string };

const dockGroups: DockApp[][] = [
  [
    { name: 'Finder', icon: <Finder />, running: true },
    { name: 'Launchpad', icon: <Launchpad /> },
    { name: 'Safari', icon: <Safari /> },
    { name: 'Messages', icon: <Messages />, badge: '1' },
    { name: 'Mail', icon: <Mail /> },
    { name: 'FaceTime', icon: <FaceTime /> },
    { name: 'Calendar', icon: <Calendar /> },
    { name: 'Reminders', icon: <Reminders /> },
    { name: 'Notes', icon: <Notes /> },
    { name: 'Music', icon: <Music />, running: true },
    { name: 'App Store', icon: <AppStore /> },
    { name: 'System Settings', icon: <SystemSettings />, badge: '1' },
    { name: 'Teams', icon: <Teams />, running: true },
    { name: 'WhatsApp', icon: <WhatsAppTile /> },
    { name: 'Chrome', icon: <ChromeTile />, running: true },
    { name: 'OpenVPN', icon: <OpenVpn /> },
    { name: 'Slack', icon: <Slack /> },
    { name: 'Outlook', icon: <Outlook />, running: true },
    { name: 'Cursor', icon: <Cursor />, running: true },
    { name: 'iPhone Mirroring', icon: <IPhone /> },
    { name: 'MySQL Workbench', icon: <MySql /> },
    { name: 'Claude', icon: <Claude /> },
  ],
  [
    { name: 'Finder windows', icon: <FinderPair /> },
    { name: 'Excel', icon: <Excel />, running: true },
    { name: 'Xcode', icon: <Xcode />, running: true },
  ],
  [
    { name: 'CSV file', icon: <CsvFile /> },
    { name: 'Bin', icon: <TrashCan /> },
  ],
];

function Dock() {
  return (
    <footer className="relative z-10 flex h-[120px] shrink-0 items-start justify-center pt-[2px]">
      <svg viewBox="0 0 190 50" className="absolute bottom-0 left-0 h-[50px] w-[190px]" fill="none">
        <path d="M60 48 190 12" stroke="#b4622c" strokeWidth="3" opacity="0.800" />
        <path d="M60 50 190 18" stroke="#5a2c12" strokeWidth="5" opacity="0.500" />
      </svg>
      <div className="relative flex h-[108px] gap-5 rounded-[34px] border-2 border-[#3a3a3a] bg-[#141414] px-3 pt-[14px] shadow-[0_0_130px_rgba(0,0,0,0.28)]">
        {dockGroups.map((group, g) => (
          <React.Fragment key={g}>
            {g > 0 && <span className="mx-[10px] -mt-[2px] h-20 w-[2px] bg-[#545454]" />}
            {group.map((app) => (
              <button key={app.name} aria-label={app.name} className="relative flex size-[70px] items-center justify-center">
                {app.icon}
                {app.running && <span className="absolute -bottom-[18px] left-[31px] size-2 rounded-full bg-[#969696]" />}
                {app.badge && (
                  <span className="absolute -right-[10px] -top-[9px] flex size-[34px] items-center justify-center rounded-full bg-[#dc4b3d] text-[22px] text-white">
                    {app.badge}
                  </span>
                )}
              </button>
            ))}
          </React.Fragment>
        ))}
      </div>
    </footer>
  );
}

export default function App() {
  return (
    <div className="flex h-screen flex-col overflow-hidden bg-black font-['Inter',sans-serif]">
      <MenuBar />
      <div className="flex min-h-0 flex-1 flex-col overflow-hidden rounded-[22px] border-t-2 border-[#66616c] bg-[#241d2c]">
        <TabStrip />
        <Toolbar />
        <WebPage />
      </div>
      <Dock />
    </div>
  );
}
